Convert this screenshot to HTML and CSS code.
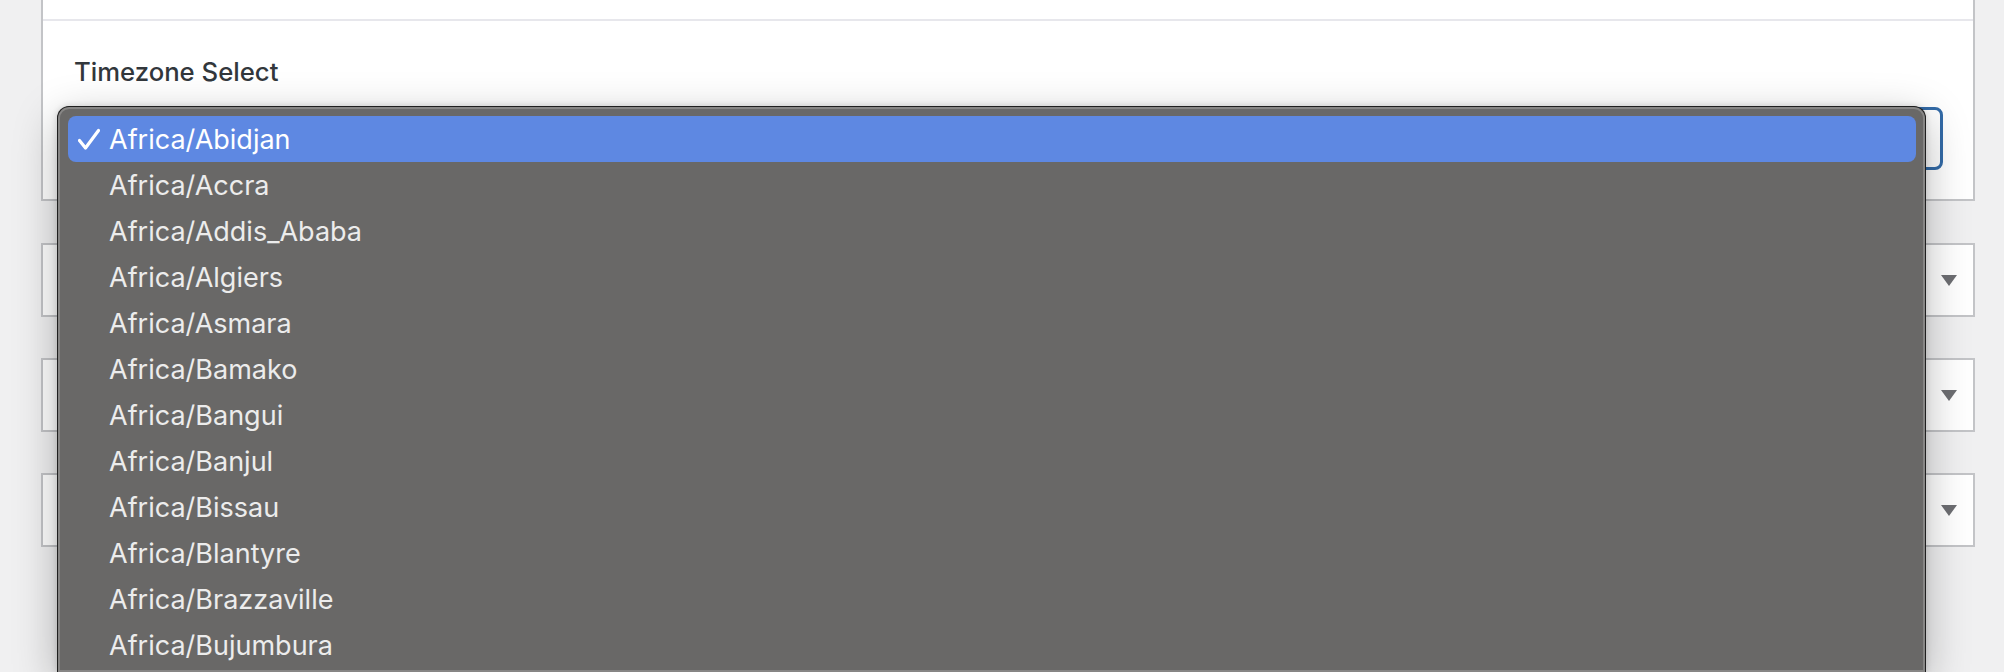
FILE: index.html
```html
<!DOCTYPE html>
<html lang="en">
<head>
<meta charset="utf-8">
<title>Timezone Select</title>
<link rel="stylesheet" href="styles.css">
</head>
<body>
<div class="page">
  <section class="card">
    <div class="card-head"></div>
    <div class="card-body">
      <label class="field-label">Timezone Select</label>
      <div class="select select-focused"></div>
    </div>
  </section>
  <div class="select-box"><svg class="arrow" viewBox="0 0 16 11" width="16" height="11"><path d="M0 0H16L8 11Z"/></svg></div>
  <div class="select-box"><svg class="arrow" viewBox="0 0 16 11" width="16" height="11"><path d="M0 0H16L8 11Z"/></svg></div>
  <div class="select-box"><svg class="arrow" viewBox="0 0 16 11" width="16" height="11"><path d="M0 0H16L8 11Z"/></svg></div>
</div>

<div class="menu">
  <ul class="menu-list">
    <li class="menu-item menu-item-active"><span class="check"><svg viewBox="0 0 22 22" width="22" height="22"><path d="M1.5 12.5L7.5 20L20.5 2.5" fill="none" stroke="#fff" stroke-width="3.2" stroke-linecap="round" stroke-linejoin="round"/></svg></span>Africa/Abidjan</li>
    <li class="menu-item"><span class="check"></span>Africa/Accra</li>
    <li class="menu-item"><span class="check"></span>Africa/Addis_Ababa</li>
    <li class="menu-item"><span class="check"></span>Africa/Algiers</li>
    <li class="menu-item"><span class="check"></span>Africa/Asmara</li>
    <li class="menu-item"><span class="check"></span>Africa/Bamako</li>
    <li class="menu-item"><span class="check"></span>Africa/Bangui</li>
    <li class="menu-item"><span class="check"></span>Africa/Banjul</li>
    <li class="menu-item"><span class="check"></span>Africa/Bissau</li>
    <li class="menu-item"><span class="check"></span>Africa/Blantyre</li>
    <li class="menu-item"><span class="check"></span>Africa/Brazzaville</li>
    <li class="menu-item"><span class="check"></span>Africa/Bujumbura</li>
  </ul>
</div>
</body>
</html>
```

FILE: styles.css
```css
html, body {
  margin: 0;
  padding: 0;
  overflow: hidden;
  height: 672px;
}

body {
  background: #f0f0f1;
  font-family: "Inter", "Noto Sans", sans-serif;
  -webkit-font-smoothing: antialiased;
  position: relative;
}

.page {
  padding: 0 29px 0 41px;
}

.card {
  background: #fff;
  border: 2px solid #c3c4c7;
  border-top: 0;
}

.card-head {
  height: 19px;
  border-bottom: 2px solid #e7e7ec;
}

.card-body {
  padding: 35px 30px 29px 31px;
}

.field-label {
  display: block;
  font-size: 25.7px;
  line-height: 32px;
  font-weight: 500;
  color: #32373c;
  margin-bottom: 19px;
}

.select {
  box-sizing: border-box;
  height: 63px;
  border-radius: 8px;
  background: #fff;
}

.select-focused {
  border: 3px solid #336ba8;
}

.select-box {
  box-sizing: border-box;
  height: 74px;
  margin-top: 41px;
  background: #fff;
  border: 2px solid #c3c4c7;
  display: flex;
  align-items: center;
  justify-content: flex-end;
  padding-right: 16px;
}

.card + .select-box {
  margin-top: 42px;
}

.arrow {
  display: block;
  fill: #6d6e72;
}

.menu {
  position: absolute;
  left: 57px;
  top: 106px;
  width: 1869px;
  height: 566px;
  box-sizing: border-box;
  background: #696867;
  border: 1px solid #1f1f1f;
  border-bottom: 0;
  border-radius: 12px 12px 0 0;
  box-shadow: inset 0 0 0 2px #878685, 0 12px 44px rgba(0, 0, 0, 0.28), 0 0 6px rgba(0, 0, 0, 0.15);
  padding: 9px 9px 0 10px;
  overflow: hidden;
}

.menu-list {
  list-style: none;
  margin: 0;
  padding: 0;
}

.menu-item {
  display: flex;
  align-items: center;
  height: 46px;
  border-radius: 8px;
  font-size: 27px;
  color: #ececec;
  white-space: nowrap;
}

.menu-item-active {
  background: #5e88e2;
  color: #fff;
}

.check {
  flex: 0 0 41px;
  display: flex;
  align-items: center;
  padding-left: 10px;
  box-sizing: border-box;
}

.check svg {
  display: block;
}
```
